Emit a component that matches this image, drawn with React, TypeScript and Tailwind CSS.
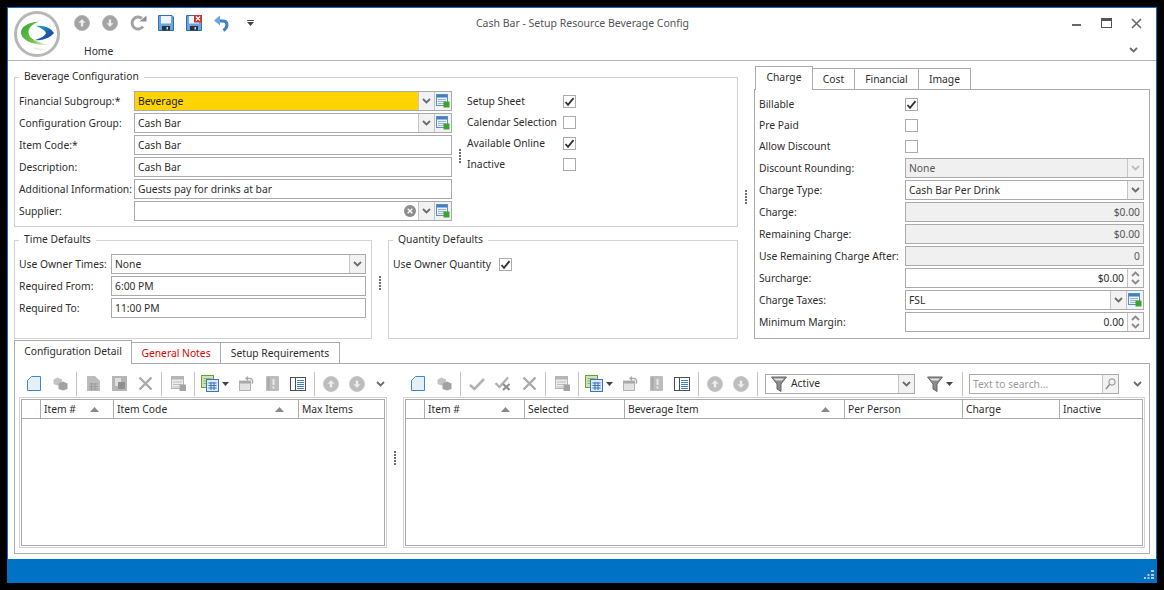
import React from 'react';

const Chevron = ({ color = '#6b6b6b', up = false }: { color?: string; up?: boolean }) => (
  <svg width="9" height="6" viewBox="0 0 9 6" className="block">
    <path d={up ? 'M1 5 L4.5 1.5 L8 5' : 'M1 1 L4.5 4.5 L8 1'} fill="none" stroke={color} strokeWidth="1.8" />
  </svg>
);

const Check = () => (
  <svg width="11" height="11" viewBox="0 0 11 11" className="block">
    <path d="M1.5 6 L4 8.8 L9.5 2.2" fill="none" stroke="#333" strokeWidth="1.8" />
  </svg>
);

const Checkbox = ({ on = false }: { on?: boolean }) => (
  <span className="flex h-[13px] w-[13px] shrink-0 items-center justify-center border border-[#ababab] bg-white">
    {on && <Check />}
  </span>
);

const AddIcon = () => (
  <svg width="14" height="14" viewBox="0 0 14 14" className="block">
    <rect x="0.5" y="0.5" width="11" height="11" fill="#e9f1fa" stroke="#5b8fc4" />
    <rect x="1" y="1" width="10" height="2.5" fill="#3f7fc2" />
    <path d="M2 5.5h8M2 7.5h8M2 9.5h8" stroke="#9db4cc" />
    <rect x="7.5" y="7.5" width="6" height="6" fill="#3da32e" />
  </svg>
);

const Disc = ({ down = false, dark = false }: { down?: boolean; dark?: boolean }) => (
  <svg width="16" height="16" viewBox="0 0 16 16" className="block">
    <circle cx="8" cy="8" r="7.5" fill={dark ? '#a3a3a3' : '#bdbdbd'} stroke={dark ? '#b5b5b5' : '#c8c8c8'} />
    <path
      d={down ? 'M8 12 L4.5 8.2 H6.8 V4.5 H9.2 V8.2 H11.5 Z' : 'M8 4 L11.5 7.8 H9.2 V11.5 H6.8 V7.8 H4.5 Z'}
      fill="#ececec"
    />
  </svg>
);

const Refresh = () => (
  <svg width="17" height="16" viewBox="0 0 17 16" className="block">
    <path d="M13 11.5 A6 6 0 1 1 12 3.5" fill="none" stroke="#a3a3a3" strokeWidth="3" />
    <path d="M9.5 6.5 H16.5 V0.5 Z" fill="#8f8f8f" />
  </svg>
);

const Floppy = ({ close = false }: { close?: boolean }) => (
  <svg width="16" height="16" viewBox="0 0 16 16" className="block">
    <path d="M0.5 0.5 H14 L15.5 2 V15.5 H0.5 Z" fill="#6aa5e0" stroke="#2f6fb4" />
    <rect x="3" y="1" width="10" height="7.5" fill="#f0f5fb" />
    <rect x="4" y="11" width="8" height="4.5" fill="#28323f" />
    <rect x="8.5" y="12" width="1.5" height="2.5" fill="#cfd8e3" />
    {close && (
      <>
        <rect x="8" y="0" width="8" height="7.5" fill="#d0342c" />
        <path d="M10 1.5 L14 5.5 M14 1.5 L10 5.5" stroke="#fff" strokeWidth="1.3" />
      </>
    )}
  </svg>
);

const Undo = () => (
  <svg width="16" height="17" viewBox="0 0 16 17" className="block">
    <path d="M4 6 H9 C14 6 14.5 12 9.5 15.5" fill="none" stroke="#3f7fc4" strokeWidth="3" />
    <path d="M6 0.5 L0 5.5 L6 10.5 Z" fill="#6aa5e0" />
  </svg>
);

const Page = () => (
  <svg width="14" height="15" viewBox="0 0 14 15" className="block">
    <path d="M4.5 0.5 H13.5 V14.5 H0.5 V4.5 Z" fill="#e6f0fb" stroke="#3f86d0" />
  </svg>
);

const Cubes = () => (
  <svg width="15" height="14" viewBox="0 0 15 14" className="block">
    <path d="M0.5 2.5 L4.5 0.5 L9 2.5 V7 L4.5 8.5 L0.5 7 Z" fill="#c4c4c4" />
    <path d="M5.5 6.5 L10 4.5 L14.5 6.5 V12 L10 13.5 L5.5 12 Z" fill="#a2a2a2" />
  </svg>
);

const GridDoc = () => (
  <svg width="13" height="15" viewBox="0 0 13 15" className="block">
    <path d="M0 0 H8 L13 5 V15 H0 Z" fill="#bcbcbc" />
    <path d="M2 8h9M2 10.5h9M2 13h9M4.5 7v7.5M8 7v7.5" stroke="#9b9b9b" />
  </svg>
);

const CopyDoc = () => (
  <svg width="15" height="15" viewBox="0 0 15 15" className="block">
    <rect width="15" height="15" fill="#b5b5b5" />
    <rect x="3" y="2" width="6" height="8" fill="#dedede" />
    <rect x="6" y="6" width="7" height="7" fill="#8f8f8f" />
  </svg>
);

const XIcon = () => (
  <svg width="15" height="15" viewBox="0 0 15 15" className="block">
    <path d="M1.5 1.5 L13.5 13.5 M13.5 1.5 L1.5 13.5" stroke="#a9a9a9" strokeWidth="2.4" />
  </svg>
);

const TableGray = () => (
  <svg width="15" height="15" viewBox="0 0 15 15" className="block">
    <rect x="0.5" y="0.5" width="12" height="12" fill="#ececec" stroke="#b5b5b5" />
    <rect x="1" y="1" width="11" height="2.5" fill="#b5b5b5" />
    <path d="M2 6h9M2 8.5h9M2 11h6" stroke="#bcbcbc" />
    <rect x="8.5" y="8.5" width="6.5" height="6.5" fill="#a3a3a3" />
  </svg>
);

const GreenBlue = () => (
  <svg width="18" height="17" viewBox="0 0 18 17" className="block">
    <rect x="0.5" y="0.5" width="12" height="12" fill="#cfe3b5" stroke="#6f9a3b" />
    <path d="M2.5 3.5h8M2.5 6h8M2.5 8.5h8" stroke="#8fb562" />
    <rect x="5.5" y="4.5" width="12" height="12" fill="#dbe8f8" stroke="#3b74bb" />
    <path d="M7.5 8h8M7.5 10.5h8M7.5 13h8M10 7v8M13 7v8" stroke="#3b74bb" />
  </svg>
);

const Restore = () => (
  <svg width="15" height="15" viewBox="0 0 15 15" className="block">
    <rect x="0.5" y="5" width="11" height="9.5" fill="#e2e2e2" stroke="#b3b3b3" />
    <rect x="0.5" y="5" width="11" height="2.5" fill="#a8a8a8" />
    <path d="M8 2.5 H11 C14 2.5 14 6 13 7.5" fill="none" stroke="#a8a8a8" strokeWidth="1.5" />
    <path d="M9 0 L6 2.5 L9 5 Z" fill="#a8a8a8" />
  </svg>
);

const AlertDoc = () => (
  <svg width="13" height="15" viewBox="0 0 13 15" className="block">
    <rect width="13" height="15" rx="1" fill="#bdbdbd" />
    <rect x="1.5" y="1.5" width="2" height="12" fill="#a6a6a6" />
    <rect x="6.5" y="3" width="2" height="6" fill="#eaeaea" />
    <rect x="6.5" y="10.5" width="2" height="2" fill="#eaeaea" />
  </svg>
);

const Columns = () => (
  <svg width="16" height="14" viewBox="0 0 16 14" className="block">
    <rect x="0.5" y="0.5" width="15" height="13" fill="#fff" stroke="#4d4d4d" />
    <path d="M5.5 1v12" stroke="#4d4d4d" />
    <path d="M7 3.5h7M7 5.5h7M7 7.5h7M7 9.5h7M7 11.5h7" stroke="#3f7fc4" />
  </svg>
);

const CheckGray = () => (
  <svg width="16" height="14" viewBox="0 0 16 14" className="block">
    <path d="M1 8 L5.5 12 L15 2" fill="none" stroke="#b3b3b3" strokeWidth="2.6" />
  </svg>
);

const CheckX = () => (
  <svg width="16" height="15" viewBox="0 0 16 15" className="block">
    <path d="M0.5 7 L4.5 11 L13 1.5" fill="none" stroke="#b3b3b3" strokeWidth="2.4" />
    <path d="M8 8 L14.5 14 M14.5 8 L8 14" stroke="#8f8f8f" strokeWidth="2.2" />
  </svg>
);

const Funnel = () => (
  <svg width="16" height="16" viewBox="0 0 16 16" className="block">
    <path d="M0.5 1 H15.5 L10 8 V15.5 L6 13 V8 Z" fill="#8c8c8c" stroke="#666" />
    <path d="M2.5 2.5 H13 L11 4.5 H5 Z" fill="#e4e4e4" />
  </svg>
);

const Caret = () => (
  <svg width="7" height="4" viewBox="0 0 7 4" className="block">
    <path d="M0 0 H7 L3.5 4 Z" fill="#444" />
  </svg>
);

const SortUp = () => (
  <svg width="9" height="5" viewBox="0 0 9 5" className="block">
    <path d="M0 5 L4.5 0 L9 5 Z" fill="#8a8a8a" />
  </svg>
);

const Logo = () => (
  <svg width="46" height="46" viewBox="0 0 46 46" className="my-[3px] block shrink-0">
    <defs>
      <linearGradient id="lens" x1="0" y1="0" x2="1" y2="1">
        <stop offset="0" stopColor="#29b3c9" />
        <stop offset="0.55" stopColor="#1c5fae" />
        <stop offset="1" stopColor="#173f86" />
      </linearGradient>
      <linearGradient id="swoosh" x1="0" y1="0" x2="1" y2="0.6">
        <stop offset="0" stopColor="#2fa83a" />
        <stop offset="0.65" stopColor="#6fc13f" />
        <stop offset="1" stopColor="#d5e6b5" />
      </linearGradient>
    </defs>
    <circle cx="23" cy="23" r="21.5" fill="#fff" stroke="#b7b7b7" strokeWidth="3" />
    <path d="M25 10.5 C14 11 7 16 7 21.5 C7 29 20 35 35 34 C25 32 14.5 28 14.5 21.5 C14.5 17 18 13 25 10.5 Z" fill="url(#swoosh)" />
    <path d="M22 15 C30 14 37 17 40 22 C36 27 28 30 21 29 C27 27 31 25 32 22 C31 19 27 17 22 15 Z" fill="url(#lens)" />
    <path d="M18 36 C24 38 30 38.5 34 37.5 C28 40 22 39 18 36 Z" fill="#e3ead2" />
  </svg>
);

const Sep = () => <span className="mx-[3px] h-[24px] w-px shrink-0 bg-[#c4c4c4]" />;

const Btn = ({ children }: { children: React.ReactNode }) => (
  <span className="flex h-[26px] w-[26px] shrink-0 items-center justify-center">{children}</span>
);

const SplitBtn = ({ children }: { children: React.ReactNode }) => (
  <span className="flex h-[26px] w-[35px] shrink-0 items-center gap-[3px] pl-[3px]">
    {children}
    <Caret />
  </span>
);

const Dots = () => (
  <span className="flex flex-col gap-[1px]">
    {[0, 1, 2, 3, 4].map((d) => (
      <span key={d} className="h-[2px] w-[2px] bg-[#6e6e6e]" />
    ))}
  </span>
);

const Box = ({
  children,
  className = '',
}: {
  children?: React.ReactNode;
  className?: string;
}) => <div className={`flex h-[20px] items-stretch border border-[#ababab] ${className}`}>{children}</div>;

const Value = ({ text = '', right = false, muted = false }: { text?: string; right?: boolean; muted?: boolean }) => (
  <span
    className={`min-w-0 flex-1 truncate px-[3px] leading-[18px] ${right ? 'text-right' : ''} ${muted ? 'text-[#555]' : ''}`}
  >
    {text}
  </span>
);

const Drop = ({ faded = false }: { faded?: boolean }) => (
  <span className="flex w-[16px] shrink-0 items-center justify-center border-l border-[#c4c4c4] bg-[#f2f2f2]">
    <Chevron color={faded ? '#bdbdbd' : '#6b6b6b'} />
  </span>
);

const Add = () => (
  <span className="flex w-[17px] shrink-0 items-center justify-center border-l border-[#c4c4c4] bg-[#f2f2f2]">
    <AddIcon />
  </span>
);

const Spin = () => (
  <span className="flex w-[16px] shrink-0 flex-col items-center justify-center gap-[2px] border-l border-[#c4c4c4] bg-[#f7f7f7]">
    <Chevron color="#8a8a8a" up />
    <Chevron color="#8a8a8a" />
  </span>
);

const Row = ({ label, w, children, h = 'h-[22px]' }: { label: string; w: string; children: React.ReactNode; h?: string }) => (
  <div className={`flex items-center ${h}`}>
    <span className={`shrink-0 whitespace-nowrap ${w}`}>{label}</span>
    <div className="min-w-0 flex-1">{children}</div>
  </div>
);

const Group = ({ title, className, children }: { title: string; className: string; children: React.ReactNode }) => (
  <fieldset className={`min-w-0 border border-[#d2d2d2] ${className}`}>
    <legend className="ml-[4px] h-[14px] px-[5px] leading-[12px]">{title}</legend>
    {children}
  </fieldset>
);

const CheckRow = ({ label, on }: { label: string; on?: boolean }) => (
  <div className="flex h-[21px] items-center">
    <span className="w-[96px] whitespace-nowrap">{label}</span>
    <Checkbox on={on} />
  </div>
);

const PanelCheck = ({ label, on }: { label: string; on?: boolean }) => (
  <div className="flex h-[21px] items-center">
    <span className="w-[146px]">{label}</span>
    <Checkbox on={on} />
  </div>
);

const Tab = ({
  label,
  active,
  red,
  className,
}: {
  label: string;
  active?: boolean;
  red?: boolean;
  className: string;
}) => (
  <div
    className={`flex items-center justify-center border border-b-0 border-l-0 border-[#ababab] first:border-l ${className} ${
      active ? 'relative z-10 -mb-px h-[24px] bg-white pb-[2px]' : 'h-[21px]'
    } ${red ? 'text-[#e00000]' : ''}`}
  >
    {label}
  </div>
);

type Col = { label: string; w: string; sort?: boolean };

const GridTable = ({ cols }: { cols: Col[] }) => (
  <div className="flex-1 border border-[#d2d2d2] p-px">
    <div className="h-full border border-[#ababab]">
      <div className="flex h-[19px] border-b border-[#ababab]">
        {cols.map((c, i) => (
          <div
            key={i}
            className={`flex items-center justify-between border-[#ababab] pl-[3px] pr-[14px] ${c.w} ${
              i < cols.length - 1 ? 'border-r' : ''
            }`}
          >
            <span className="whitespace-nowrap">{c.label}</span>
            {c.sort && <SortUp />}
          </div>
        ))}
      </div>
    </div>
  </div>
);

const leftCols: Col[] = [
  { label: '', w: 'w-[19px]' },
  { label: 'Item #', w: 'w-[73px]', sort: true },
  { label: 'Item Code', w: 'w-[185px]', sort: true },
  { label: 'Max Items', w: 'flex-1' },
];

const rightCols: Col[] = [
  { label: '', w: 'w-[19px]' },
  { label: 'Item #', w: 'w-[100px]', sort: true },
  { label: 'Selected', w: 'w-[100px]' },
  { label: 'Beverage Item', w: 'w-[220px]', sort: true },
  { label: 'Per Person', w: 'w-[118px]' },
  { label: 'Charge', w: 'w-[97px]' },
  { label: 'Inactive', w: 'flex-1' },
];

export default function App() {
  return (
    <div className="h-[590px] w-[1164px] overflow-hidden bg-black p-[7px] pr-[7px] text-[10.3px] leading-[15px] text-[#2e2e2e] [font-family:'Noto_Sans','Liberation_Sans',sans-serif]">
      <div className="flex h-[576px] w-[1150px] flex-col border border-[#0072c6] bg-white">
        {/* ribbon */}
        <header className="flex h-[53px] shrink-0 items-start border-b border-[#b4b4b4] bg-white">
          <div className="flex flex-1 pl-[6px]">
            <Logo />
            <div className="ml-[8px]">
              <div className="flex h-[30px] items-center">
                {[<Disc key="u" dark />, <Disc key="d" down dark />, <Refresh key="r" />, <Floppy key="s" />, <Floppy key="c" close />, <Undo key="b" />].map((icon, i) => (
                  <span key={i} className="flex w-[28px] items-center justify-center">
                    {icon}
                  </span>
                ))}
                <span className="flex w-[28px] flex-col items-center gap-[1px]">
                  <span className="h-px w-[7px] bg-[#555]" />
                  <Caret />
                </span>
              </div>
              <div className="ml-[16px] mt-[6px] h-[14px] leading-[14px]">Home</div>
            </div>
          </div>
          <div className="flex h-[30px] items-center text-[10.5px] text-[#555]">Cash Bar - Setup Resource Beverage Config</div>
          <div className="flex flex-1 flex-col items-end pr-[5px]">
            <div className="flex h-[30px] items-center">
              <span className="flex w-[30px] justify-center">
                <span className="mt-[4px] h-[2px] w-[9px] bg-[#666]" />
              </span>
              <span className="flex w-[30px] justify-center">
                <span className="h-[10px] w-[11px] border border-t-[3px] border-[#555]" />
              </span>
              <span className="flex w-[30px] justify-center">
                <svg width="11" height="11" viewBox="0 0 11 11" className="block">
                  <path d="M1 1 L10 10 M10 1 L1 10" stroke="#666" strokeWidth="1.6" />
                </svg>
              </span>
            </div>
            <div className="mr-[13px] mt-[9px]">
              <Chevron />
            </div>
          </div>
        </header>

        {/* top forms */}
        <div className="flex shrink-0 px-[6px] pt-[5px]">
          <div className="w-[724px] pt-[4px]">
            <Group title="Beverage Configuration" className="h-[157px]">
              <div className="flex pl-[4px] pt-[6px]">
                <div className="w-[433px]">
                  <Row label="Financial Subgroup:*" w="w-[115px]">
                    <Box>
                      <span className="min-w-0 flex-1 bg-[#ffd400] px-[3px] leading-[18px] text-[#222]">Beverage</span>
                      <Drop />
                      <Add />
                    </Box>
                  </Row>
                  <Row label="Configuration Group:" w="w-[115px]">
                    <Box>
                      <Value text="Cash Bar" />
                      <Drop />
                      <Add />
                    </Box>
                  </Row>
                  <Row label="Item Code:*" w="w-[115px]">
                    <Box>
                      <Value text="Cash Bar" />
                    </Box>
                  </Row>
                  <Row label="Description:" w="w-[115px]">
                    <Box>
                      <Value text="Cash Bar" />
                    </Box>
                  </Row>
                  <Row label="Additional Information:" w="w-[115px]">
                    <Box>
                      <Value text="Guests pay for drinks at bar" />
                    </Box>
                  </Row>
                  <Row label="Supplier:" w="w-[115px]">
                    <Box>
                      <Value />
                      <span className="flex w-[16px] items-center justify-center">
                        <svg width="12" height="12" viewBox="0 0 12 12" className="block">
                          <circle cx="6" cy="6" r="6" fill="#8e8e8e" />
                          <path d="M3.7 3.7 L8.3 8.3 M8.3 3.7 L3.7 8.3" stroke="#fff" strokeWidth="1.4" />
                        </svg>
                      </span>
                      <Drop />
                      <Add />
                    </Box>
                  </Row>
                </div>
                <div className="flex w-[15px] items-center justify-center">
                  <Dots />
                </div>
                <div className="pt-px">
                  <CheckRow label="Setup Sheet" on />
                  <CheckRow label="Calendar Selection" />
                  <CheckRow label="Available Online" on />
                  <CheckRow label="Inactive" />
                </div>
              </div>
            </Group>
            <div className="mt-[6px] flex">
              <Group title="Time Defaults" className="h-[106px] w-[358px]">
                <div className="px-[4px] pt-[6px] pr-[5px]">
                  <Row label="Use Owner Times:" w="w-[92px]">
                    <Box>
                      <Value text="None" />
                      <Drop />
                    </Box>
                  </Row>
                  <Row label="Required From:" w="w-[92px]">
                    <Box>
                      <Value text="6:00 PM" />
                    </Box>
                  </Row>
                  <Row label="Required To:" w="w-[92px]">
                    <Box>
                      <Value text="11:00 PM" />
                    </Box>
                  </Row>
                </div>
              </Group>
              <div className="flex w-[16px] items-center justify-center pb-[6px]">
                <Dots />
              </div>
              <Group title="Quantity Defaults" className="h-[106px] w-[350px]">
                <div className="mt-[6px] flex h-[22px] items-center pl-[4px]">
                  <span className="w-[106px] whitespace-nowrap">Use Owner Quantity</span>
                  <Checkbox on />
                </div>
              </Group>
            </div>
          </div>

          <div className="flex w-[16px] items-center justify-center pb-[12px]">
            <Dots />
          </div>

          <div className="w-[397px]">
            <div className="flex items-end pl-px">
              <Tab label="Charge" active className="w-[58px]" />
              <Tab label="Cost" className="w-[42px]" />
              <Tab label="Financial" className="w-[64px]" />
              <Tab label="Image" className="w-[52px]" />
            </div>
            <div className="h-[250px] border border-[#ababab] pl-[4px] pr-[5px] pt-[4px]">
              <PanelCheck label="Billable" on />
              <PanelCheck label="Pre Paid" />
              <PanelCheck label="Allow Discount" />
              <Row label="Discount Rounding:" w="w-[146px]">
                <Box className="bg-[#f0f0f0]">
                  <Value text="None" muted />
                  <Drop faded />
                </Box>
              </Row>
              <Row label="Charge Type:" w="w-[146px]">
                <Box>
                  <Value text="Cash Bar Per Drink" />
                  <Drop />
                </Box>
              </Row>
              <Row label="Charge:" w="w-[146px]">
                <Box className="bg-[#f0f0f0]">
                  <Value text="$0.00" right muted />
                </Box>
              </Row>
              <Row label="Remaining Charge:" w="w-[146px]">
                <Box className="bg-[#f0f0f0]">
                  <Value text="$0.00" right muted />
                </Box>
              </Row>
              <Row label="Use Remaining Charge After:" w="w-[146px]">
                <Box className="bg-[#f0f0f0]">
                  <Value text="0" right muted />
                </Box>
              </Row>
              <Row label="Surcharge:" w="w-[146px]">
                <Box>
                  <Value text="$0.00" right />
                  <Spin />
                </Box>
              </Row>
              <Row label="Charge Taxes:" w="w-[146px]">
                <Box>
                  <Value text="FSL" />
                  <Drop />
                  <Add />
                </Box>
              </Row>
              <Row label="Minimum Margin:" w="w-[146px]">
                <Box>
                  <Value text="0.00" right />
                  <Spin />
                </Box>
              </Row>
            </div>
          </div>
        </div>

        {/* detail tabs */}
        <div className="flex min-h-0 flex-1 flex-col px-[6px] pt-[1px]">
          <div className="flex shrink-0 items-end">
            <Tab label="Configuration Detail" active className="w-[118px]" />
            <Tab label="General Notes" red className="w-[89px]" />
            <Tab label="Setup Requirements" className="w-[119px]" />
          </div>
          <div className="flex h-[191px] shrink-0 border border-[#ababab] px-[4px] pb-[5px]">
            <div className="flex w-[368px] flex-col">
              <div className="flex h-[33px] shrink-0 items-center pl-[2px] pt-[6px]">
                <Btn><Page /></Btn>
                <Btn><Cubes /></Btn>
                <Sep />
                <Btn><GridDoc /></Btn>
                <Btn><CopyDoc /></Btn>
                <Btn><XIcon /></Btn>
                <Sep />
                <Btn><TableGray /></Btn>
                <Sep />
                <SplitBtn><GreenBlue /></SplitBtn>
                <Btn><Restore /></Btn>
                <Btn><AlertDoc /></Btn>
                <Btn><Columns /></Btn>
                <Sep />
                <Btn><Disc /></Btn>
                <Btn><Disc down /></Btn>
                <span className="ml-[6px]"><Chevron /></span>
              </div>
              <GridTable cols={leftCols} />
            </div>
            <div className="flex w-[16px] items-center justify-center pt-[4px]">
              <Dots />
            </div>
            <div className="flex min-w-0 flex-1 flex-col">
              <div className="flex h-[33px] shrink-0 items-center pl-[2px] pt-[6px]">
                <Btn><Page /></Btn>
                <Btn><Cubes /></Btn>
                <Sep />
                <Btn><CheckGray /></Btn>
                <Btn><CheckX /></Btn>
                <Btn><XIcon /></Btn>
                <Sep />
                <Btn><TableGray /></Btn>
                <Sep />
                <SplitBtn><GreenBlue /></SplitBtn>
                <Btn><Restore /></Btn>
                <Btn><AlertDoc /></Btn>
                <Btn><Columns /></Btn>
                <Sep />
                <Btn><Disc /></Btn>
                <Btn><Disc down /></Btn>
                <Sep />
                <Box className="ml-[4px] w-[150px] shrink-0">
                  <span className="flex flex-1 items-center gap-[4px] pl-[5px]">
                    <Funnel />
                    <span>Active</span>
                  </span>
                  <Drop />
                </Box>
                <span className="ml-[12px] flex w-[32px] shrink-0 items-center gap-[3px]">
                  <Funnel />
                  <Caret />
                </span>
                <Sep />
                <Box className="ml-[3px] w-[150px] shrink-0">
                  <span className="flex-1 px-[3px] leading-[18px] text-[#9a9a9a]">Text to search...</span>
                  <span className="flex w-[16px] items-center justify-center border-l border-[#c4c4c4] bg-[#f2f2f2]">
                    <svg width="11" height="12" viewBox="0 0 11 12" className="block">
                      <circle cx="7" cy="4" r="3.2" fill="none" stroke="#8a8a8a" />
                      <path d="M4.5 6.5 L1 11" stroke="#8a8a8a" strokeWidth="1.4" />
                    </svg>
                  </span>
                </Box>
                <span className="ml-[14px]"><Chevron /></span>
              </div>
              <GridTable cols={rightCols} />
            </div>
          </div>
        </div>

        {/* status bar */}
        <footer className="flex h-[23px] shrink-0 items-end justify-end bg-[#0072c6] p-[2px]">
          <svg width="10" height="10" viewBox="0 0 10 10" className="block">
            <path d="M7 0h3v2H7zM3.5 4h2v2h-2zM7 4h3v2H7zM0 7h2v2H0zM3.5 7h2v2h-2zM7 7h3v2H7z" fill="#b9c9d8" />
          </svg>
        </footer>
      </div>
    </div>
  );
}
